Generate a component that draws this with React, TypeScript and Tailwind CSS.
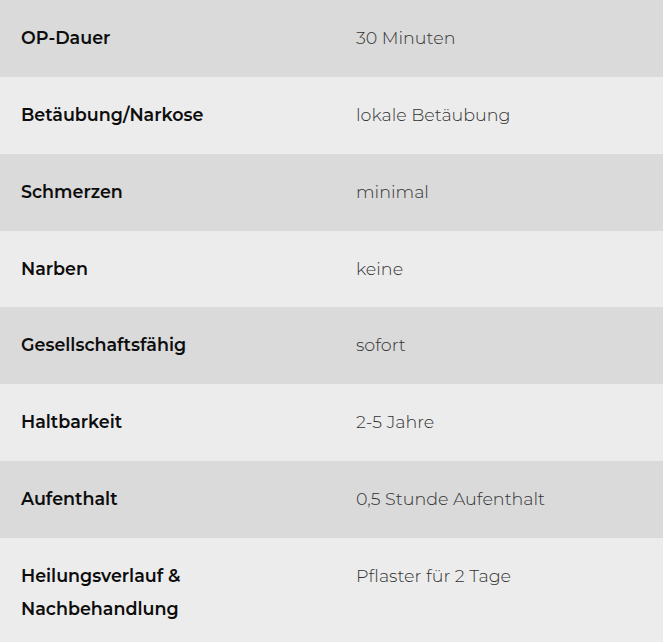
const rows: [string, string][] = [
  ["OP-Dauer", "30 Minuten"],
  ["Betäubung/Narkose", "lokale Betäubung"],
  ["Schmerzen", "minimal"],
  ["Narben", "keine"],
  ["Gesellschaftsfähig", "sofort"],
  ["Haltbarkeit", "2-5 Jahre"],
  ["Aufenthalt", "0,5 Stunde Aufenthalt"],
  ["Heilungsverlauf & Nachbehandlung", "Pflaster für 2 Tage"],
];

export default function App() {
  return (
    <div className="w-[663px] h-[642px] overflow-hidden bg-white" style={{ fontFamily: "Montserrat, Inter, 'Noto Sans', sans-serif" }}>
      {rows.map(([label, value], i) => (
        <div
          key={label}
          className={`grid grid-cols-[335px_1fr] py-[22px] text-[17.5px] leading-[32.86px] ${i % 2 === 0 ? "bg-[#dadada]" : "bg-[#ececec]"}`}
        >
          <div className="pl-[21px] pr-[40px] font-semibold text-[#0d0d0d]">{label}</div>
          <div className="pl-[21px] pr-6 font-light text-[#333333]">{value}</div>
        </div>
      ))}
    </div>
  );
}
